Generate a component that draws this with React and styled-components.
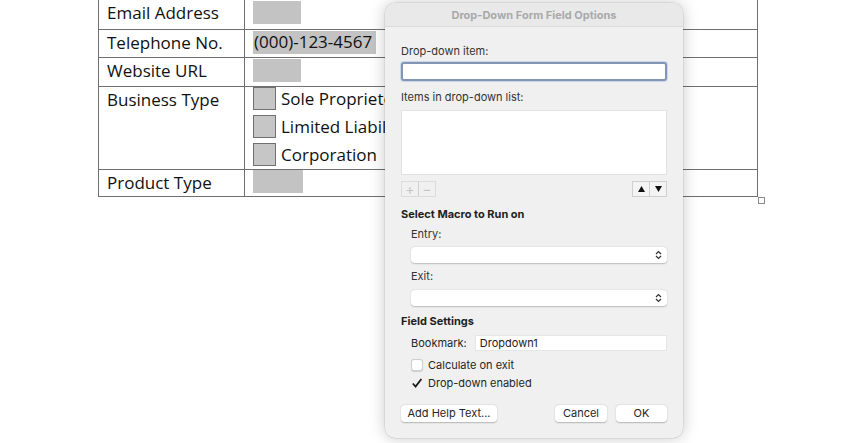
import React from 'react';
import styled, { createGlobalStyle } from 'styled-components';

const GlobalStyle = createGlobalStyle`
  html, body {
    margin: 0;
    padding: 0;
    background: #ffffff;
    overflow: hidden;
  }
`;

const Page = styled.div`
  position: relative;
  width: 850px;
  height: 443px;
  overflow: hidden;
  background: #fff;
`;

// ---- document table ----

const Table = styled.div`
  margin: -1px 0 0 98px;
  width: 660px;
  box-sizing: border-box;
  border: 1px solid #6f6f6f;
  font-family: 'Open Sans', 'Liberation Sans', sans-serif;
  font-size: 17px;
  color: #111;
`;

const Row = styled.div`
  display: grid;
  grid-template-columns: 146px 1fr;
  height: ${(p) => p.h}px;
  border-bottom: ${(p) => (p.last ? 'none' : '1px solid #6f6f6f')};
`;

const LabelCell = styled.div`
  box-sizing: border-box;
  border-right: 1px solid #6f6f6f;
  padding-left: 8px;
  line-height: 26px;
  white-space: nowrap;
`;

const FieldCell = styled.div`
  padding: ${(p) => p.top || 0}px 0 0 8px;
  display: flex;
  flex-direction: column;
  gap: 5px;
  overflow: hidden;
`;

const Shade = styled.div`
  width: ${(p) => p.w || 48}px;
  height: 23px;
  background: #c3c3c3;
  line-height: 21px;
  white-space: nowrap;
  padding-left: 1px;
  box-sizing: border-box;
`;

const CheckLine = styled.div`
  display: flex;
  align-items: center;
  gap: 5px;
  height: 23px;
  line-height: 21px;
  white-space: nowrap;
`;

const GrayBox = styled.div`
  flex: none;
  width: 23px;
  height: 23px;
  box-sizing: border-box;
  border: 1.5px solid #707070;
  background: #c6c6c6;
`;

const Handle = styled.div`
  position: absolute;
  left: 758px;
  top: 197px;
  width: 5px;
  height: 5px;
  border: 1px solid #8a8a8a;
  background: #fff;
`;

// ---- dialog ----

const Dialog = styled.div`
  position: absolute;
  left: 385px;
  top: 3px;
  width: 298px;
  height: 435px;
  background: #f0f0f0;
  border-radius: 10px;
  box-shadow: 0 0 16px rgba(0, 0, 0, 0.22), 0 0 0 0.5px rgba(0, 0, 0, 0.12);
  font-family: 'Inter', 'Liberation Sans', sans-serif;
  font-size: 11px;
  color: #262626;
  overflow: hidden;
`;

const TitleBar = styled.div`
  height: 24px;
  line-height: 24px;
  text-align: center;
  font-weight: 700;
  font-size: 11px;
  color: #a9a9a9;
  background: #e9e9e9;
  border-bottom: 1px solid #dcdcdc;
  box-sizing: border-box;
`;

const Body = styled.div`
  display: flex;
  flex-direction: column;
  padding: 0 16px 0 16px;
`;

const Label = styled.div`
  margin-top: ${(p) => p.mt || 0}px;
  margin-left: ${(p) => (p.indent ? 10 : 0)}px;
  height: 14px;
  line-height: 14px;
  font-weight: ${(p) => (p.bold ? 700 : 400)};
  color: ${(p) => (p.bold ? '#1e1e1e' : '#333')};
`;

const TextInput = styled.div`
  margin-top: ${(p) => p.mt || 0}px;
  height: 19px;
  box-sizing: border-box;
  background: #fff;
  border: 2px solid #8397b5;
  border-radius: 3px;
  box-shadow: 0 0 0 1px #c9d6ea;
`;

const ListBox = styled.div`
  margin-top: ${(p) => p.mt || 0}px;
  height: 65px;
  background: #fff;
  border: 1px solid #e2e2e2;
  box-sizing: border-box;
`;

const ToolRow = styled.div`
  margin-top: ${(p) => p.mt || 0}px;
  display: flex;
  justify-content: space-between;
  height: 16px;
`;

const Segmented = styled.div`
  display: flex;
  height: 16px;
  border: 1px solid ${(p) => (p.disabled ? '#dcdcdc' : '#cfcfcf')};
  box-sizing: border-box;
  background: ${(p) => (p.disabled ? '#f0f0f0' : '#f4f4f4')};
`;

const Seg = styled.div`
  width: 16px;
  display: flex;
  align-items: center;
  justify-content: center;
  color: ${(p) => (p.disabled ? '#c4c4c4' : '#111')};
  font-size: ${(p) => (p.disabled ? 14 : 8)}px;
  line-height: 1;
  & + & {
    border-left: 1px solid ${(p) => (p.disabled ? '#dcdcdc' : '#cfcfcf')};
  }
`;

const Select = styled.div`
  margin-top: ${(p) => p.mt || 0}px;
  margin-left: 10px;
  height: 16px;
  background: #fff;
  border-radius: 4px;
  box-shadow: 0 0.5px 1.5px rgba(0, 0, 0, 0.22);
  display: flex;
  align-items: center;
  justify-content: flex-end;
  padding-right: 5px;
`;

const FieldRow = styled.div`
  margin-top: ${(p) => p.mt || 0}px;
  margin-left: 10px;
  display: flex;
  align-items: center;
  gap: 8px;
  height: 16px;
`;

const PlainInput = styled.div`
  flex: 1;
  height: 16px;
  background: #fff;
  border: 1px solid #e6e6e6;
  box-sizing: border-box;
  line-height: 14px;
  padding-left: 4px;
  color: #222;
`;

const CheckRow = styled.div`
  margin-top: ${(p) => p.mt || 0}px;
  margin-left: 10px;
  display: flex;
  align-items: center;
  gap: 5px;
  height: 14px;
`;

const Box = styled.div`
  width: 12px;
  height: 12px;
  box-sizing: border-box;
  border-radius: 3px;
  background: ${(p) => (p.checked ? 'transparent' : '#fff')};
  border: ${(p) => (p.checked ? 'none' : '0.5px solid #d0d0d0')};
  box-shadow: ${(p) => (p.checked ? 'none' : '0 0.5px 1px rgba(0,0,0,0.15)')};
  display: flex;
  align-items: center;
  justify-content: center;
`;

const Footer = styled.div`
  margin-top: 15px;
  display: flex;
  align-items: center;
  gap: 9px;
`;

const Button = styled.div`
  width: ${(p) => p.w}px;
  height: 17px;
  line-height: 17px;
  text-align: center;
  background: #fff;
  border-radius: 4px;
  box-shadow: 0 0.5px 1.5px rgba(0, 0, 0, 0.25);
  color: #262626;
  margin-left: ${(p) => (p.push ? 'auto' : '0')};
`;

const UpDown = () => (
  <svg width="7" height="10" viewBox="0 0 7 10">
    <polyline points="1,4 3.5,1.5 6,4" fill="none" stroke="#333" strokeWidth="1.2" />
    <polyline points="1,6 3.5,8.5 6,6" fill="none" stroke="#333" strokeWidth="1.2" />
  </svg>
);

const Tick = () => (
  <svg width="12" height="12" viewBox="0 0 12 12">
    <polyline points="1.8,6.5 4.6,9.6 10.4,2" fill="none" stroke="#1a1a1a" strokeWidth="1.8" />
  </svg>
);

const Tri = ({ down }) => (
  <svg width="7" height="6" viewBox="0 0 7 6">
    <polygon points={down ? '0,0 7,0 3.5,6' : '3.5,0 7,6 0,6'} fill="#111" />
  </svg>
);

export default function App() {
  return (
    <Page>
      <GlobalStyle />
      <Table>
        <Row h={29}>
          <LabelCell>Email Address</LabelCell>
          <FieldCell top={1}>
            <Shade />
          </FieldCell>
        </Row>
        <Row h={27}>
          <LabelCell>Telephone No.</LabelCell>
          <FieldCell top={1}>
            <Shade w={123}>(000)-123-4567</Shade>
          </FieldCell>
        </Row>
        <Row h={28}>
          <LabelCell>Website URL</LabelCell>
          <FieldCell top={1}>
            <Shade />
          </FieldCell>
        </Row>
        <Row h={82}>
          <LabelCell>Business Type</LabelCell>
          <FieldCell top={0}>
            <CheckLine>
              <GrayBox />
              Sole Proprietorship
            </CheckLine>
            <CheckLine>
              <GrayBox />
              Limited Liability Company
            </CheckLine>
            <CheckLine>
              <GrayBox />
              Corporation
            </CheckLine>
          </FieldCell>
        </Row>
        <Row h={26} last>
          <LabelCell>Product Type</LabelCell>
          <FieldCell top={0}>
            <Shade w={50} />
          </FieldCell>
        </Row>
      </Table>
      <Handle />

      <Dialog>
        <TitleBar>Drop-Down Form Field Options</TitleBar>
        <Body>
          <Label mt={17}>Drop-down item:</Label>
          <TextInput mt={4} />
          <Label mt={9}>Items in drop-down list:</Label>
          <ListBox mt={6} />
          <ToolRow mt={6}>
            <Segmented disabled>
              <Seg disabled>+</Seg>
              <Seg disabled>−</Seg>
            </Segmented>
            <Segmented>
              <Seg>
                <Tri />
              </Seg>
              <Seg>
                <Tri down />
              </Seg>
            </Segmented>
          </ToolRow>
          <Label mt={10} bold>
            Select Macro to Run on
          </Label>
          <Label mt={6} indent>
            Entry:
          </Label>
          <Select mt={6}>
            <UpDown />
          </Select>
          <Label mt={6} indent>
            Exit:
          </Label>
          <Select mt={7}>
            <UpDown />
          </Select>
          <Label mt={8} bold>
            Field Settings
          </Label>
          <FieldRow mt={7}>
            Bookmark:
            <PlainInput>Dropdown1</PlainInput>
          </FieldRow>
          <CheckRow mt={7}>
            <Box />
            Calculate on exit
          </CheckRow>
          <CheckRow mt={4}>
            <Box checked>
              <Tick />
            </Box>
            Drop-down enabled
          </CheckRow>
          <Footer>
            <Button w={96}>Add Help Text...</Button>
            <Button w={52} push>
              Cancel
            </Button>
            <Button w={51}>OK</Button>
          </Footer>
        </Body>
      </Dialog>
    </Page>
  );
}
